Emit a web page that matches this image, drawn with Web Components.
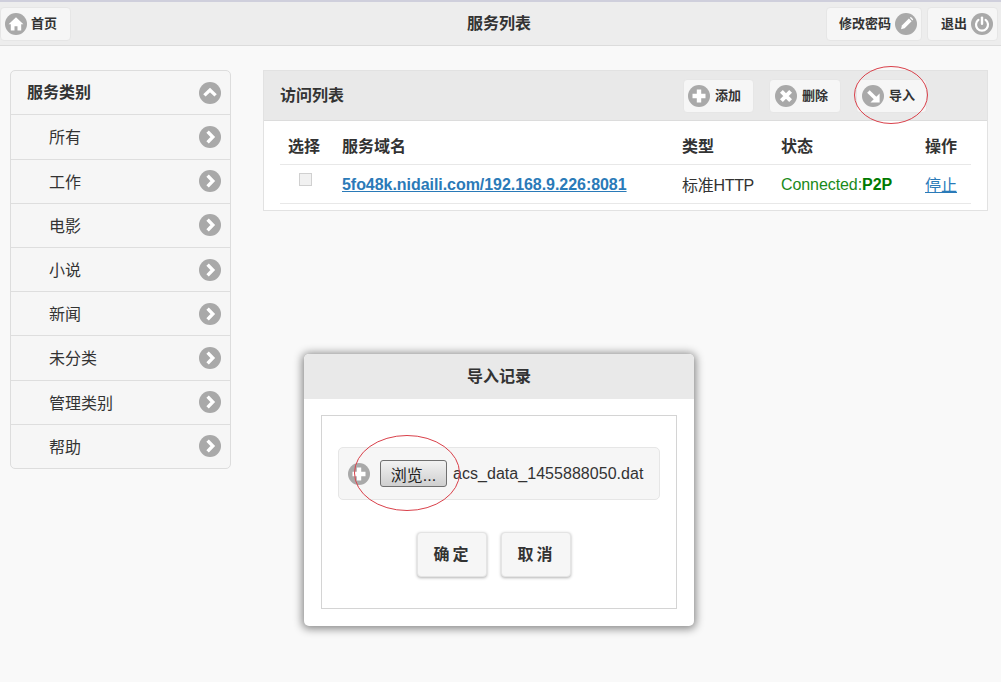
<!DOCTYPE html>
<html lang="zh">
<head>
<meta charset="utf-8">
<title>服务列表</title>
<style>
  html, body { margin: 0; height: 100%; }
  body {
    background: #f9f9f9;
    color: #333;
    font-family: "Liberation Sans", "Noto Sans CJK SC", sans-serif;
    overflow: hidden;
    position: relative;
  }
</style>
</head>
<body>
<app-page>
  <top-bar slot="top" title="服务列表">
    <nav-button slot="left" icon="home" side="left" pad="4" gap="4">首页</nav-button>
    <nav-button slot="right" icon="pencil" side="right" width="96">修改密码</nav-button>
    <nav-button slot="right" icon="power" side="right">退出</nav-button>
  </top-bar>
  <side-menu slot="side">
    <side-item head icon="up">服务类别</side-item>
    <side-item>所有</side-item>
    <side-item>工作</side-item>
    <side-item>电影</side-item>
    <side-item>小说</side-item>
    <side-item>新闻</side-item>
    <side-item>未分类</side-item>
    <side-item>管理类别</side-item>
    <side-item>帮助</side-item>
  </side-menu>
  <access-panel slot="main"></access-panel>
</app-page>
<import-dialog></import-dialog>

<script>
// 图标路径, 都画在 22x22 的灰色圆里
const ICONS = {
  home: '<path d="M11 4.2 3.6 11.2h2.2v6.4h3.7v-4.3h3v4.3h3.7v-6.4h2.2z" fill="#fff"/>',
  pencil: '<path d="M6 16.2 6.9 12.6 13.9 5.6 16.6 8.3 9.6 15.3z" fill="#fff"/><path d="M14.8 4.7 15.9 3.9 18.2 6.2 17.5 7.4z" fill="#fff"/>',
  power: '<path d="M7.4 6.8a6 6 0 1 0 7.2 0" fill="none" stroke="#fff" stroke-width="2.2" stroke-linecap="round"/><path d="M11 4.6v6.2" stroke="#fff" stroke-width="2.4" stroke-linecap="round"/>',
  plus: '<path d="M11 4.5v13M4.5 11h13" stroke="#fff" stroke-width="4.4"/>',
  del: '<path d="M6.4 6.4l9.2 9.2M15.6 6.4l-9.2 9.2" stroke="#fff" stroke-width="4"/>',
  import: '<path d="M6.4 6.4l7.4 7.4" stroke="#fff" stroke-width="3.6"/><path d="M17.6 8.4v9.2H8.4z" fill="#fff"/>',
  right: '<path d="M8.6 5.6 13.8 11l-5.2 5.4" fill="none" stroke="#fff" stroke-width="3.4"/>',
  up: '<path d="M5.4 13.4 11 8l5.6 5.4" fill="none" stroke="#fff" stroke-width="3.4"/>',
};

function iconDisc(name) {
  return `<svg width="22" height="22" viewBox="0 0 22 22" style="display:block;flex:none"><circle cx="11" cy="11" r="11" fill="#a9a9a9"/>${ICONS[name]}</svg>`;
}

class AppPage extends HTMLElement {
  constructor() {
    super();
    this.attachShadow({ mode: "open" });
    this.shadowRoot.innerHTML = `
      <style>
        :host { display: block; }
        .cols {
          display: grid;
          grid-template-columns: 221px 725px;
          column-gap: 32px;
          padding: 24px 0 0 10px;
          align-items: start;
        }
      </style>
      <slot name="top"></slot>
      <div class="cols">
        <slot name="side"></slot>
        <slot name="main"></slot>
      </div>`;
  }
}
customElements.define("app-page", AppPage);

class TopBar extends HTMLElement {
  constructor() {
    super();
    this.attachShadow({ mode: "open" });
    this.shadowRoot.innerHTML = `
      <style>
        :host {
          display: grid;
          grid-template-columns: 1fr auto 1fr;
          align-items: center;
          box-sizing: border-box;
          height: 46px;
          padding: 0 3px 0 0;
          background: #ededed;
          border-top: 2px solid #cfcfdc;
          border-bottom: 1px solid #dcdcdc;
        }
        h1 { margin: 0 0 3px; font-size: 16px; font-weight: 700; color: #333; }
        .right { display: flex; justify-content: flex-end; gap: 5px; }
      </style>
      <div><slot name="left"></slot></div>
      <h1></h1>
      <div class="right"><slot name="right"></slot></div>`;
    this.shadowRoot.querySelector("h1").textContent = this.getAttribute("title");
  }
}
customElements.define("top-bar", TopBar);

class NavButton extends HTMLElement {
  constructor() {
    super();
    this.attachShadow({ mode: "open" });
    const icon = iconDisc(this.getAttribute("icon"));
    const left = this.getAttribute("side") !== "right";
    const width = this.getAttribute("width") || 71;
    const pad = this.getAttribute("pad") || (left ? 5 : 4);
    const gap = this.getAttribute("gap") || (left ? 5 : 4);
    this.shadowRoot.innerHTML = `
      <style>
        :host {
          display: flex;
          align-items: center;
          justify-content: ${left ? "flex-start" : "flex-end"};
          gap: ${gap}px;
          box-sizing: border-box;
          width: ${width}px;
          height: 34px;
          padding: ${left ? `0 0 0 ${pad}px` : `0 ${pad}px 0 0`};
          background: #f6f6f6;
          border: 1px solid #e6e6e6;
          border-radius: 4px;
          font-size: 13px;
          font-weight: 700;
          color: #333;
        }
        .t { padding-bottom: 2px; }
      </style>
      ${left ? icon : ""}<span class="t"><slot></slot></span>${left ? "" : icon}`;
  }
}
customElements.define("nav-button", NavButton);

class SideMenu extends HTMLElement {
  constructor() {
    super();
    this.attachShadow({ mode: "open" });
    this.shadowRoot.innerHTML = `
      <style>
        :host {
          display: block;
          background: #f6f6f6;
          border: 1px solid #ddd;
          border-radius: 5px;
          overflow: hidden;
        }
      </style>
      <slot></slot>`;
  }
}
customElements.define("side-menu", SideMenu);

class SideItem extends HTMLElement {
  constructor() {
    super();
    this.attachShadow({ mode: "open" });
    const head = this.hasAttribute("head");
    this.shadowRoot.innerHTML = `
      <style>
        :host {
          display: flex;
          align-items: center;
          justify-content: space-between;
          box-sizing: border-box;
          height: ${head ? 43.4 : 44.2}px;
          padding: 0 9px 0 ${head ? 16 : 38}px;
          font-size: 16px;
          font-weight: ${head ? 700 : 400};
          color: #333;
          border-top: ${head ? 0 : 1}px solid #dedede;
        }
        span { padding-bottom: ${head ? 3 : 1}px; }
      </style>
      <span><slot></slot></span>${iconDisc(this.getAttribute("icon") || "right")}`;
  }
}
customElements.define("side-item", SideItem);

class AccessPanel extends HTMLElement {
  constructor() {
    super();
    this.attachShadow({ mode: "open" });
    this.shadowRoot.innerHTML = `
      <style>
        :host {
          display: block;
          height: 141px;
          box-sizing: border-box;
          background: #fff;
          border: 1px solid #e2e2e2;
          --cols: 62px 340px 99px 144px 47px;
        }
        header {
          display: flex;
          align-items: center;
          box-sizing: border-box;
          height: 50px;
          padding: 0 60px 0 16px;
          background: #e9e9e9;
          border-bottom: 1px solid #dcdcdc;
          font-size: 16px;
          font-weight: 700;
          color: #333;
        }
        header .title { margin-right: auto; padding-bottom: 3px; }
        header .tools { display: flex; gap: 15px; }
        .table { margin: 0 16px; }
        .row {
          display: grid;
          grid-template-columns: var(--cols);
          align-items: center;
          box-sizing: border-box;
          font-size: 16px;
          color: #333;
          border-bottom: 1px solid #e8e8e8;
        }
        .row.th { height: 44px; padding-top: 5px; font-weight: 700; }
        .row.td { height: 39px; }
        .row > :first-child { padding-left: 8px; }
        .box {
          display: block;
          box-sizing: border-box;
          width: 13px;
          height: 13px;
          margin: -9px 0 0 11px;
          background: #f1f1f1;
          border: 1px solid #d0d0d0;
        }
        a { color: #2a7ab8; text-decoration: underline; }
        a.host { font-weight: 700; letter-spacing: -.05px; }
        .latin { padding-top: 1px; }
        .kind { letter-spacing: -.3px; }
        .stop { padding-bottom: 1px; }
        .ok { color: #1a8a1a; white-space: nowrap; letter-spacing: -.08px; }
        .ok b { color: #007a00; }
      </style>
      <header>
        <span class="title">访问列表</span>
        <div class="tools">
          <nav-button icon="plus" width="71" pad="4">添加</nav-button>
          <nav-button icon="del" width="72">删除</nav-button>
          <nav-button icon="import" width="71">导入</nav-button>
        </div>
      </header>
      <div class="table">
        <div class="row th"><span>选择</span><span>服务域名</span><span>类型</span><span>状态</span><span>操作</span></div>
        <div class="row td">
          <span><span class="box"></span></span>
          <span class="latin"><a class="host" href="#">5fo48k.nidaili.com/192.168.9.226:8081</a></span>
          <span class="kind">标准HTTP</span>
          <span class="ok latin">Connected:<b>P2P</b></span>
          <span class="stop"><a href="#">停止</a></span>
        </div>
      </div>
      <svg width="76" height="60" viewBox="0 0 76 60" style="position:absolute;left:853px;top:66px;overflow:visible"><ellipse cx="38" cy="29" rx="36.5" ry="28.5" fill="none" stroke="#d9404a" stroke-width="1"/></svg>`;
  }
}
customElements.define("access-panel", AccessPanel);

class ImportDialog extends HTMLElement {
  constructor() {
    super();
    this.attachShadow({ mode: "open" });
    this.shadowRoot.innerHTML = `
      <style>
        :host {
          position: absolute;
          left: 304px;
          top: 354px;
          width: 390px;
          height: 272px;
          box-sizing: border-box;
          background: #fff;
          border-radius: 5px;
          box-shadow: 0 1px 8px 2px rgba(0,0,0,.45);
          color: #333;
        }
        h2 {
          margin: 0;
          height: 45px;
          line-height: 46px;
          text-align: center;
          font-size: 16px;
          font-weight: 700;
          background: #e9e9e9;
          border-radius: 5px 5px 0 0;
        }
        .inner {
          box-sizing: border-box;
          margin: 16px 17px 0;
          height: 194px;
          padding: 31px 16px 0;
          border: 1px solid #d4d4d4;
        }
        .file {
          display: flex;
          align-items: center;
          box-sizing: border-box;
          height: 53px;
          padding-left: 9px;
          background: #f6f6f6;
          border: 1px solid #e6e6e6;
          border-radius: 5px;
          font-size: 16px;
        }
        .file span { letter-spacing: .04px; }
        .browse {
          box-sizing: border-box;
          width: 67px;
          height: 27px;
          margin: 0 6px 0 10px;
          padding: 0;
          font: 16px "Liberation Sans", "Noto Sans CJK SC", sans-serif;
          color: #222;
          background: linear-gradient(#f2f2f2, #cfcfcf);
          border: 1px solid #707070;
          border-radius: 3px;
        }
        .actions { display: flex; justify-content: center; gap: 14px; margin-top: 32px; padding-right: 10px; }
        .act {
          box-sizing: border-box;
          width: 70px;
          height: 45px;
          padding: 0 0 4px 1px;
          font: 700 16px "Liberation Sans", "Noto Sans CJK SC", sans-serif;
          letter-spacing: 3px;
          color: #333;
          background: #f6f6f6;
          border: 1px solid #e4e4e4;
          border-radius: 4px;
          box-shadow: 0 1px 3px rgba(0,0,0,.3);
        }
        svg.mark { position: absolute; left: 50px; top: 81px; overflow: visible; }
      </style>
      <h2>导入记录</h2>
      <div class="inner">
        <div class="file">
          ${iconDisc("plus")}
          <button class="browse">浏览...</button>
          <span>acs_data_1455888050.dat</span>
        </div>
        <div class="actions">
          <button class="act">确定</button>
          <button class="act">取消</button>
        </div>
      </div>
      <svg class="mark" width="106" height="76" viewBox="0 0 106 76"><ellipse cx="53" cy="38" rx="52.5" ry="37.5" fill="none" stroke="#d9404a" stroke-width="1"/></svg>`;
  }
}
customElements.define("import-dialog", ImportDialog);
</script>
</body>
</html>
